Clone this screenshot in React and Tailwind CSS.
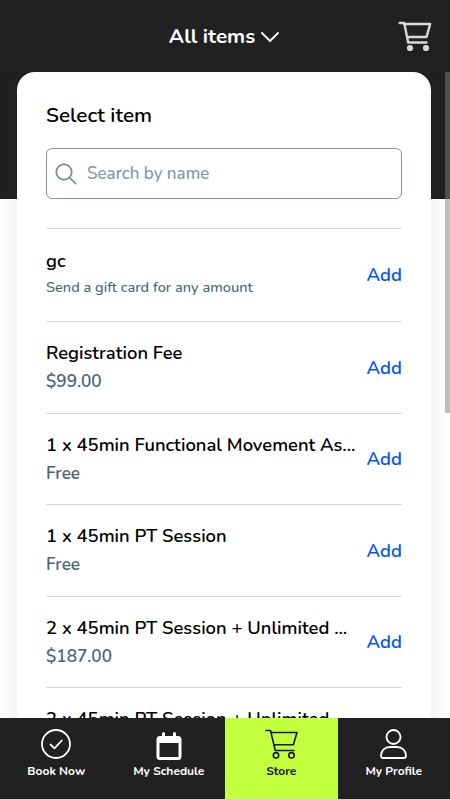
import React from "react";

const items = [
  { name: "gc", detail: "Send a gift card for any amount", small: true, height: "h-[93px]" },
  { name: "Registration Fee", detail: "$99.00", height: "h-[92px]" },
  { name: "1 x 45min Functional Movement As...", detail: "Free", height: "h-[91px]" },
  { name: "1 x 45min PT Session", detail: "Free", height: "h-[92px]" },
  { name: "2 x 45min PT Session + Unlimited ...", detail: "$187.00", height: "h-[91px]" },
  { name: "2 x 45min PT Session + Unlimited ...", detail: "$187.00", height: "h-[92px]" },
];

function Tab({ label, active, children }) {
  return (
    <div className={`flex flex-1 flex-col items-center pt-[9px] ${active ? "bg-[#c2ff3d] text-[#17171f]" : "text-white"}`}>
      <div className="flex h-[34px] items-center justify-center">{children}</div>
      <span className="mt-[1px] text-[12px] font-bold leading-[18px] whitespace-nowrap">{label}</span>
    </div>
  );
}

export default function App() {
  return (
    <div className="flex h-[800px] w-[450px] flex-col overflow-hidden bg-white font-['Nunito','Open_Sans',sans-serif] text-black">
      <header className="grid h-[72px] shrink-0 grid-cols-[1fr_auto_1fr] items-center bg-[#212121] text-white">
        <div />
        <div className="flex items-center gap-[6px] pr-[2px]">
          <span className="text-[20.6px] font-bold leading-[28px] whitespace-nowrap">All items</span>
          <svg className="mt-[2px] h-[12px] w-[18px]" viewBox="0 0 18 12" fill="none" stroke="currentColor" strokeWidth="1.8" strokeLinecap="round" strokeLinejoin="round">
            <path d="M1 2l8 8 8-8" />
          </svg>
        </div>
        <div className="flex justify-end pr-[18px]">
          <svg className="h-[32px] w-[34px] text-[#d9d9d9]" viewBox="0 0 34 32" fill="none" stroke="currentColor" strokeWidth="2.4" strokeLinecap="round" strokeLinejoin="round">
            <path d="M1.700 3h4.500l4 19.500h18.300M6.600 4h25.600l-3.700 13H9.300" />
            <circle cx="12" cy="28" r="3.100" fill="currentColor" stroke="none" />
            <circle cx="28" cy="28" r="3.100" fill="currentColor" stroke="none" />
          </svg>
        </div>
      </header>

      <main className="relative h-[646px] shrink-0 overflow-hidden bg-[linear-gradient(to_bottom,#212121_127px,#ffffff_127px)]">
        <section className="mr-[19px] ml-[17px] h-[760px] rounded-[18px] bg-white px-[29px] pt-[29px] shadow-[0_0_24px_rgba(30,35,80,0.10)]">
          <h1 className="text-[20.8px] font-semibold leading-[28px]">Select item</h1>
          <div className="mt-[19px] flex h-[51px] items-center rounded-[6px] border border-[#84939c] pl-[8px]">
            <svg className="h-[22px] w-[22px] text-[#84939c]" viewBox="0 0 22 22" fill="none" stroke="currentColor" strokeWidth="1.9" strokeLinecap="round">
              <circle cx="9" cy="9" r="7.700" />
              <path d="M14.600 14.600l6 6" />
            </svg>
            <span className="ml-[10px] text-[17px] font-medium leading-[24px] text-[#84959f]">Search by name</span>
          </div>
          <ul className="mt-[29px] border-t border-[#d6d6d6]">
            {items.map((item, i) => (
              <li key={i} className={`flex items-center justify-between border-b border-[#d6d6d6] ${item.height}`}>
                <div className={item.small ? "min-w-0 pb-[3px]" : "min-w-0"}>
                  <p className="text-[18.4px] font-semibold leading-[28px] whitespace-nowrap">{item.name}</p>
                  <p className={item.small ? "text-[14.6px] font-medium leading-[25px] text-[#4c6472] whitespace-nowrap" : "pt-px text-[17.2px] font-semibold leading-[28px] text-[#4c6472]"}>{item.detail}</p>
                </div>
                <span className="text-[18.500px] font-semibold leading-[28px] text-[#0855f0]">Add</span>
              </li>
            ))}
          </ul>
        </section>
        <div className="absolute top-0 right-0 h-[341px] w-[5px] bg-[#808080]/50" />
      </main>

      <nav className="flex h-[81px] shrink-0 bg-[#212121]">
        <Tab label="Book Now">
          <svg className="h-[30px] w-[30px]" viewBox="0 0 30 30" fill="none" stroke="currentColor" strokeWidth="1.8" strokeLinecap="round" strokeLinejoin="round">
            <circle cx="15" cy="15" r="14" />
            <path d="M9.500 15.500l4 3.800 7.300-7.800" />
          </svg>
        </Tab>
        <Tab label="My Schedule">
          <svg className="mt-[4px] h-[29px] w-[26px]" viewBox="0 0 26 29" fill="currentColor">
            <path fillRule="evenodd" d="M6 1.500a1.500 1.500 0 0 1 3 0V4h8V1.500a1.500 1.500 0 0 1 3 0V4h2a3.500 3.500 0 0 1 3.500 3.500v17A3.500 3.500 0 0 1 22 28H4A3.500 3.500 0 0 1 .5 24.500V7.500A3.500 3.500 0 0 1 4 4h2zM3.500 11v14h19V11z" />
          </svg>
        </Tab>
        <Tab label="Store" active>
          <svg className="h-[30px] w-[33px]" viewBox="0 0 33 30" fill="none" stroke="currentColor" strokeWidth="1.600" strokeLinecap="round" strokeLinejoin="round">
            <path d="M1 1.500h4.500l4.800 20h18.700M6 3.500h26l-3.600 12.300H9" />
            <circle cx="11" cy="26.300" r="2.700" />
            <circle cx="26.500" cy="26.300" r="2.700" />
          </svg>
        </Tab>
        <Tab label="My Profile">
          <svg className="h-[30px] w-[27px]" viewBox="0 0 27 30" fill="none" stroke="currentColor" strokeWidth="1.8" strokeLinejoin="round">
            <circle cx="13.500" cy="8" r="7" />
            <path d="M1 26.500C1 21.500 5 18 10 18h7c5 0 9 3.500 9 8.500 0 1.700-.8 2.500-2 2.500H3c-1.200 0-2-.8-2-2.500z" />
          </svg>
        </Tab>
      </nav>
      <div className="h-px shrink-0 bg-[#d2d2d2]" />
    </div>
  );
}
